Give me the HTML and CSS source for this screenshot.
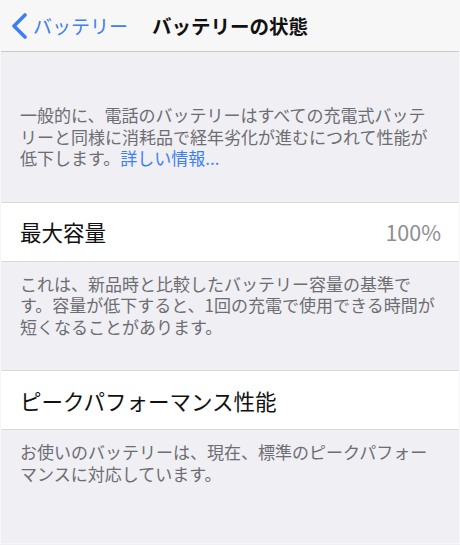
FILE: index.html
```html
<!DOCTYPE html>
<html lang="ja">
<head>
  <meta charset="UTF-8" />
  <meta name="viewport" content="width=device-width, initial-scale=1.0"/>
  <title>バッテリーの状態</title>
  <link rel="stylesheet" href="styles.css">
</head>
<body>
  <div class="screen">
    <header class="navbar">
      <a class="back" href="#">
        <svg class="chevron" width="18" height="26" viewBox="0 0 18 26">
          <path d="M15 2 L4 13 L15 24" fill="none" stroke="currentColor" stroke-width="3.6" stroke-linecap="round" stroke-linejoin="round"/>
        </svg>
        <span>バッテリー</span>
      </a>
      <h1 class="title">バッテリーの状態</h1>
      <div></div>
    </header>

    <p class="note intro">一般的に、電話のバッテリーはすべての充電式バッテリーと同様に消耗品で経年劣化が進むにつれて性能が低下します。<a href="#">詳しい情報...</a></p>

    <div class="cell">
      <span class="label">最大容量</span>
      <span class="value">100%</span>
    </div>
    <p class="note">これは、新品時と比較したバッテリー容量の基準です。容量が低下すると、1回の充電で使用できる時間が短くなることがあります。</p>

    <div class="cell">
      <span class="label">ピークパフォーマンス性能</span>
    </div>
    <p class="note">お使いのバッテリーは、現在、標準のピークパフォーマンスに対応しています。</p>
  </div>
</body>
</html>
```

FILE: styles.css
```css
body {
  margin: 0;
  font-family: "Noto Sans CJK JP", "Noto Sans", sans-serif;
  background: #efeff4;
}

.screen {
  min-height: 543px;
  border: 1px solid #f7f7f9;
  border-top: none;
  background: #efeff4;
}

.navbar {
  display: grid;
  grid-template-columns: 1fr auto 1fr;
  align-items: center;
  height: 51px;
  background: #f7f7f7;
  border-bottom: 1px solid #c9c9cc;
}

.back {
  display: flex;
  align-items: center;
  gap: 5px;
  padding-left: 9px;
  color: #3d7ff2;
  text-decoration: none;
  font-size: 19px;
}

.chevron {
  flex-shrink: 0;
}

.title {
  margin: 0;
  font-size: 19.5px;
  font-weight: bold;
  color: #111;
}

.note {
  margin: 0;
  padding: 11px 20px 33px 19px;
  font-size: 17px;
  line-height: 21.5px;
  color: #6d6d72;
}

.note a {
  color: #3d7ff2;
  text-decoration: none;
}

.intro {
  padding-top: 52px;
}

.cell {
  display: flex;
  justify-content: space-between;
  align-items: center;
  height: 58px;
  padding: 0 18px 0 19px;
  background: #fff;
  border-top: 1px solid #d9d9dd;
  border-bottom: 1px solid #d9d9dd;
  font-size: 21.5px;
  color: #111;
}

.value {
  color: #8e8e93;
}
```
